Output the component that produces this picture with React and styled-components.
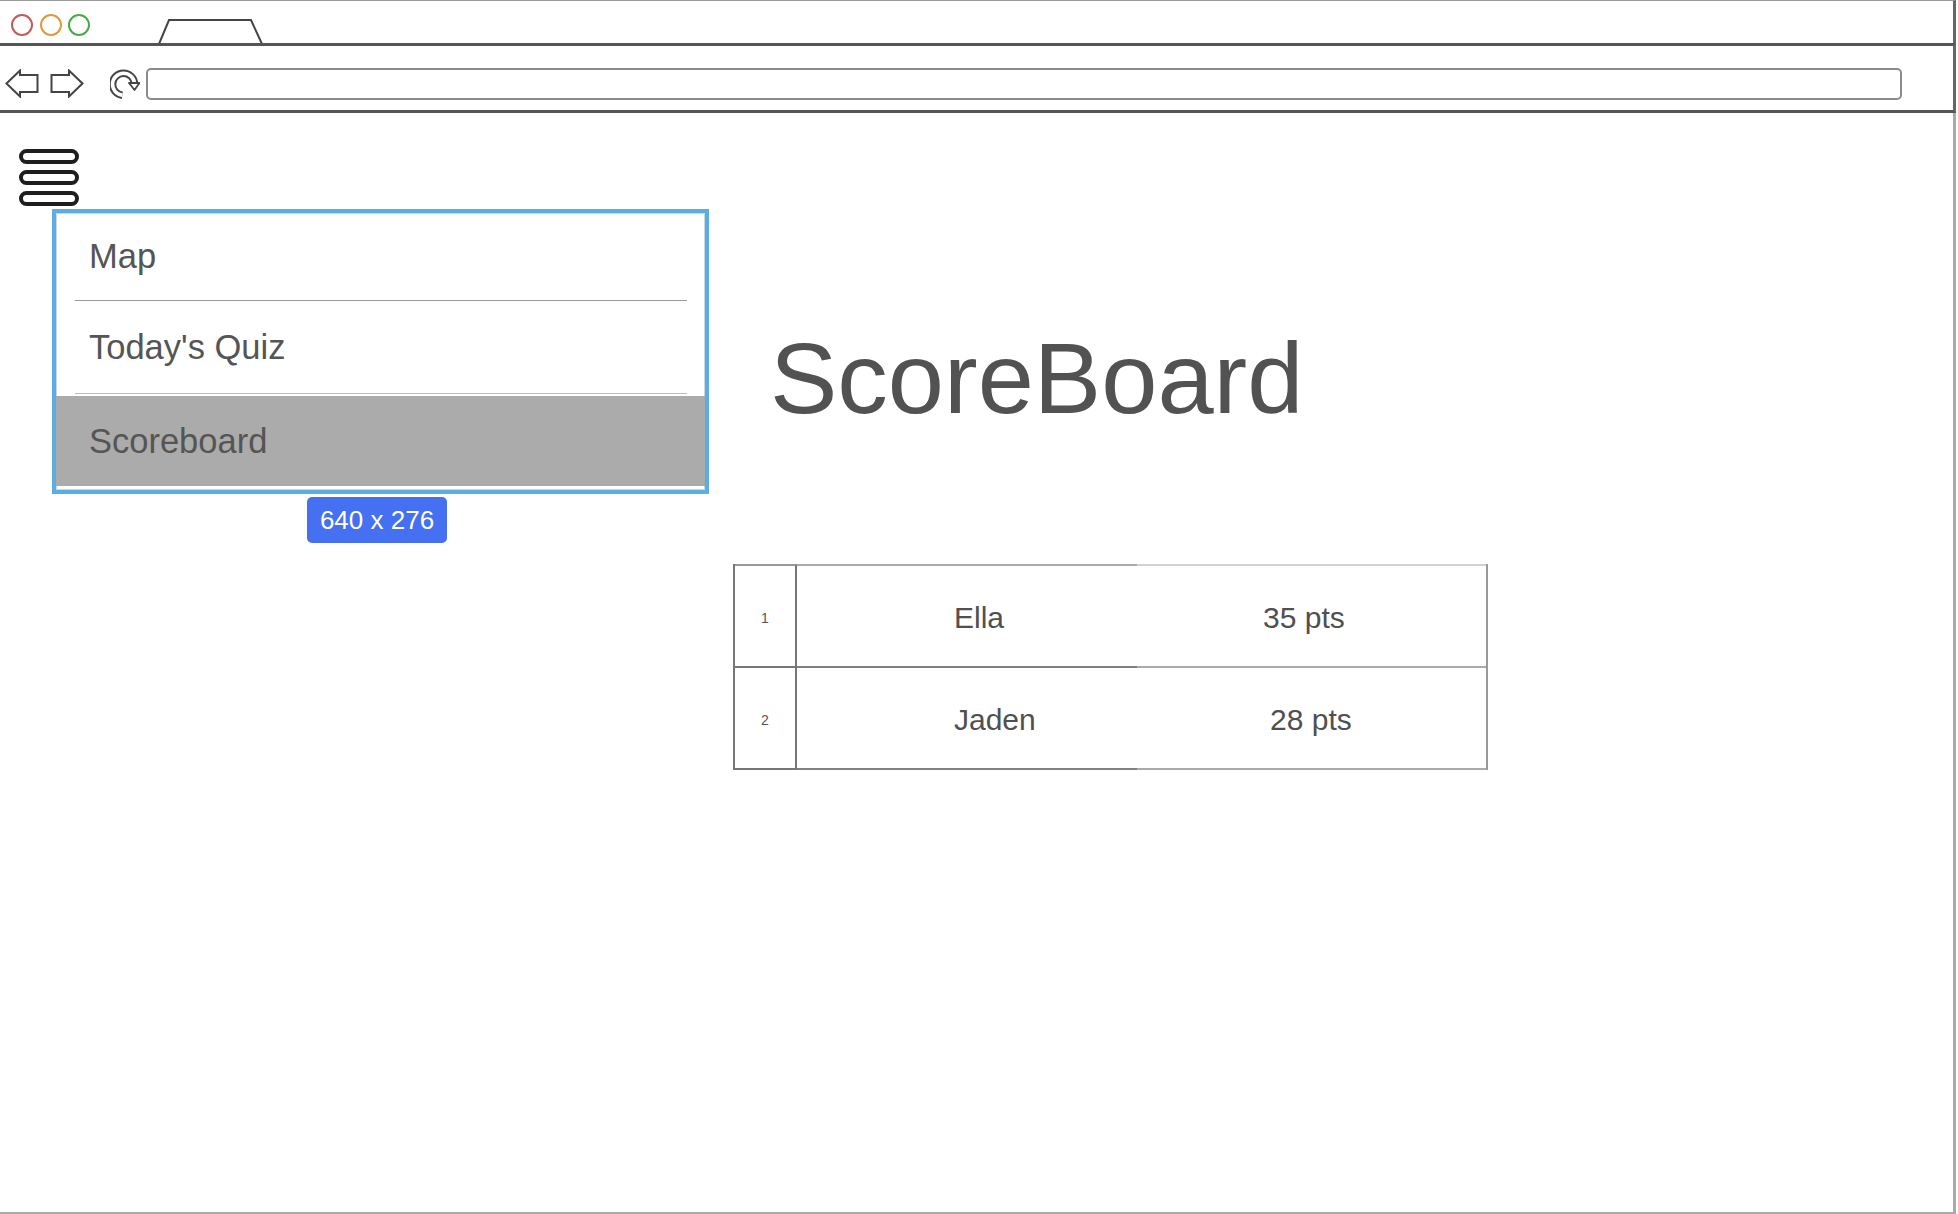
import React from "react";
import styled, { createGlobalStyle } from "styled-components";

const Global = createGlobalStyle`
  html, body { margin: 0; padding: 0; background: #ffffff; overflow: hidden; }
  body { font-family: "Liberation Sans", Arial, sans-serif; }
  * { box-sizing: border-box; }
`;

const Window = styled.div`
  width: 1956px;
  height: 1214px;
  display: flex;
  flex-direction: column;
  background: #fff;
`;

const TitleBar = styled.div`
  height: 43px;
  border-top: 1px solid #9a9a9a;
  border-right: 3px solid #666;
  display: flex;
  align-items: flex-start;
  padding-left: 11px;
`;

const Lights = styled.div`
  display: flex;
  gap: 6.5px;
  margin-top: 13px;
`;

const Light = styled.span`
  width: 22px;
  height: 22px;
  border-radius: 50%;
  border: 2.5px solid ${(p) => p.$color};
  background: #fff;
`;

const TabSvg = styled.svg`
  align-self: flex-end;
  margin-left: 68px;
  margin-bottom: -1px;
  display: block;
`;

const Toolbar = styled.div`
  height: 70px;
  border-top: 3px solid #555;
  border-bottom: 3px solid #555;
  border-right: 3px solid #666;
  display: flex;
  align-items: flex-start;
  padding: 22px 51px 0 5px;
`;

const NavSvg = styled.svg`
  display: block;
  flex: none;
  margin-left: ${(p) => p.$ml || 0}px;
  margin-top: ${(p) => p.$mt || 0}px;
`;

const UrlBar = styled.div`
  flex: 1;
  height: 32px;
  margin-left: 6px;
  border: 2px solid #8a8a8a;
  border-radius: 5px;
`;

const Content = styled.div`
  flex: 1;
  border-right: 3px solid #aaa;
  border-bottom: 2px solid #aaa;
  display: flex;
  flex-direction: column;
`;

const MenuArea = styled.div`
  position: relative;
  padding: 36px 0 0 19px;
`;

const Hamburger = styled.div`
  display: flex;
  flex-direction: column;
  gap: 6px;
  width: 60px;
`;

const Pill = styled.span`
  display: block;
  height: 15px;
  border: 4px solid #1e1e1e;
  border-radius: 8px;
  background: #fff;
`;

const MenuPopup = styled.div`
  position: absolute;
  top: 96px;
  left: 52px;
  display: flex;
  flex-direction: column;
  z-index: 2;
`;

const MenuBox = styled.div`
  width: 657px;
  height: 285px;
  border: 4px solid #5caee2;
  box-shadow: inset 0 0 0 1px #c8d8e4;
  background: #fff;
  display: flex;
  flex-direction: column;
`;

const MenuItem = styled.div`
  height: ${(p) => p.$h}px;
  display: flex;
  align-items: center;
  padding-left: 33px;
  font-size: 34.5px;
  color: #555;
  background: ${(p) => (p.$active ? "#ababab" : "transparent")};
  margin-top: ${(p) => p.$mt || 0}px;
`;

const Divider = styled.div`
  height: 1px;
  margin: 0 18px 0 19px;
  background: ${(p) => p.$color};
`;

const SizeLabel = styled.div`
  margin-top: 3px;
  margin-left: 255px;
  width: 140px;
  height: 46px;
  border-radius: 5px;
  background: #4570f1;
  color: #fff;
  font-size: 26px;
  display: flex;
  align-items: center;
  justify-content: center;
`;

const Main = styled.div`
  padding: 121px 0 0 733px;
  display: flex;
  flex-direction: column;
`;

const Heading = styled.h1`
  margin: 0 0 0 37px;
  font-size: 101px;
  line-height: 102px;
  font-weight: 400;
  color: #525252;
`;

const Table = styled.div`
  margin-top: 135px;
  width: 755px;
  border-left: 2px solid #777;
  border-right: 2px solid #999;
  display: flex;
  flex-direction: column;
`;

const Row = styled.div`
  display: grid;
  grid-template-columns: 62px 340px 1fr;
`;

const Cell = styled.div`
  height: ${(p) => (p.$first ? 104 : 102)}px;
  padding-top: 4px;
  border-top: ${(p) => (p.$first ? `2px solid ${p.$top}` : "none")};
  border-bottom: 2px solid ${(p) => p.$bottom};
  display: flex;
  align-items: center;
  color: #505050;
`;

const IndexCell = styled(Cell)`
  border-right: 2px solid #777;
  justify-content: center;
  font-size: 14px;
  color: #555;
`;

const NameCell = styled(Cell)`
  padding-left: 157px;
  font-size: 30px;
`;

const PtsCell = styled(Cell)`
  padding-left: ${(p) => p.$shift}px;
  font-size: 30px;
`;

const BackArrow = ({ flip, ml }) => (
  <NavSvg width="34" height="29" viewBox="0 0 34 29" $ml={ml} $mt={1}
    style={flip ? { transform: "scaleX(-1)" } : undefined}>
    <path d="M1.5 14.5 L15 1.5 L15 6 L32.5 6 L32.5 23 L15 23 L15 27.5 Z"
      fill="#fff" stroke="#444" strokeWidth="2" strokeLinejoin="miter" />
  </NavSvg>
);

const RefreshIcon = () => (
  <NavSvg width="30" height="32" viewBox="0 0 30 32" $ml={26}>
    <path d="M12.3 27.2 A11 11 0 1 1 24.5 15.5" fill="none" stroke="#444" strokeWidth="7.5" />
    <path d="M12.3 27.2 A11 11 0 1 1 24.5 15.5" fill="none" stroke="#fff" strokeWidth="3.6" />
    <polygon points="19,15 29.5,15 24.5,22" fill="#fff" stroke="#444" strokeWidth="1.8" strokeLinejoin="round" />
  </NavSvg>
);

const rows = [
  { rank: 1, name: "Ella", pts: "35 pts", shift: 126 },
  { rank: 2, name: "Jaden", pts: "28 pts", shift: 133 },
];

export default function App() {
  return (
    <>
      <Global />
      <Window>
        <TitleBar>
          <Lights>
            <Light $color="#c45a5a" />
            <Light $color="#dd9b3d" />
            <Light $color="#45ad45" />
          </Lights>
          <TabSvg width="106" height="26" viewBox="0 0 106 26">
            <path d="M1 26 L11 2 L93 2 L104 26" fill="#fff" stroke="#444" strokeWidth="2" />
          </TabSvg>
        </TitleBar>
        <Toolbar>
          <BackArrow />
          <BackArrow flip ml={11} />
          <RefreshIcon />
          <UrlBar />
        </Toolbar>
        <Content>
          <MenuArea>
            <Hamburger>
              <Pill />
              <Pill />
              <Pill />
            </Hamburger>
            <MenuPopup>
              <MenuBox>
                <MenuItem $h={87}>Map</MenuItem>
                <Divider $color="#9a9a9a" />
                <MenuItem $h={92}>Today's Quiz</MenuItem>
                <Divider $color="#bdbdbd" />
                <MenuItem $h={90} $mt={2} $active>Scoreboard</MenuItem>
              </MenuBox>
              <SizeLabel>640 x 276</SizeLabel>
            </MenuPopup>
          </MenuArea>
          <Main>
            <Heading>ScoreBoard</Heading>
            <Table>
              {rows.map((r, i) => (
                <Row key={r.rank}>
                  <IndexCell $first={i === 0} $top="#999" $bottom="#777">{r.rank}</IndexCell>
                  <NameCell $first={i === 0} $top="#aaa" $bottom="#808080">{r.name}</NameCell>
                  <PtsCell $first={i === 0} $top="#d2d2d2" $bottom="#aaa" $shift={r.shift}>{r.pts}</PtsCell>
                </Row>
              ))}
            </Table>
          </Main>
        </Content>
      </Window>
    </>
  );
}
